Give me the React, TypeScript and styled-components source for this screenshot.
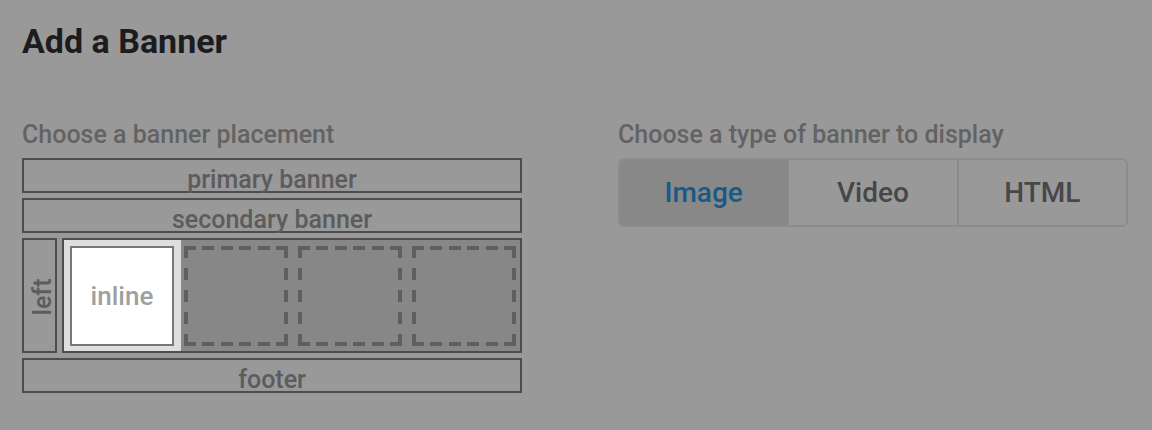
import React, { useState } from 'react';
import styled, { createGlobalStyle, css } from 'styled-components';

const GlobalStyle = createGlobalStyle`
  html, body {
    margin: 0;
    padding: 0;
    background: #999999;
  }
  body {
    font-family: Roboto, "Liberation Sans", sans-serif;
  }
`;

const dash = '#5f5f5f';

const Page = styled.div`
  padding: 24px 22px 0;
`;

const Title = styled.h1`
  margin: 0;
  font-size: 34px;
  line-height: 34px;
  font-weight: 700;
  color: #1c1c1e;
`;

const Columns = styled.div`
  display: flex;
  gap: 96px;
  margin-top: 64px;
`;

const Column = styled.div<{ $width: number }>`
  width: ${({ $width }) => $width}px;
  display: flex;
  flex-direction: column;
`;

const Label = styled.div`
  font-size: 25px;
  line-height: 25px;
  font-weight: 500;
  color: #636363;
  margin-bottom: 11px;
  white-space: nowrap;
`;

const Slots = styled.div`
  display: flex;
  flex-direction: column;
  gap: 5px;
`;

const Slot = styled.div`
  height: 35px;
  box-sizing: border-box;
  border: 2px solid #4d4d4d;
  padding-top: 10px;
  text-align: center;
  font-size: 25px;
  line-height: 20px;
  font-weight: 500;
  color: #5c5c5c;
  cursor: pointer;
`;

const MiddleRow = styled.div`
  display: flex;
  gap: 5px;
  height: 115px;
`;

const SideSlot = styled.div`
  width: 35px;
  box-sizing: border-box;
  border: 2px solid #4d4d4d;
  display: flex;
  align-items: center;
  justify-content: center;
  padding-left: 7px;
  padding-top: 2px;
  font-size: 25px;
  font-weight: 500;
  color: #5c5c5c;
  cursor: pointer;

  span {
    display: block;
    line-height: 20px;
    transform: rotate(-90deg);
    white-space: nowrap;
  }
`;

const Content = styled.div`
  flex: 1;
  box-sizing: border-box;
  border: 2px solid #4d4d4d;
  background: #878787;
  display: flex;
`;

const Cell = styled.div<{ $active: boolean }>`
  width: 114px;
  flex-shrink: 0;
  box-sizing: border-box;
  padding: 6px 4px 5px 6px;
  cursor: pointer;

  ${({ $active }) =>
    $active &&
    css`
      width: 117px;
      padding-right: 7px;
      margin-right: -3px;
      background: #dedede;
    `}
`;

// dashed outline drawn with gradients: 6 dashes across, 5 down
const CellBox = styled.div<{ $active: boolean }>`
  height: 100px;
  box-sizing: border-box;
  display: flex;
  align-items: center;
  justify-content: center;
  font-size: 26px;
  font-weight: 500;
  ${({ $active }) =>
    $active
      ? css`
          background: #ffffff;
          border: 2px solid #777777;
          color: #a0a0a0;
        `
      : css`
          background:
            repeating-linear-gradient(to right, ${dash} 0 12px, transparent 12px 18.4px) top / 100% 4px no-repeat,
            repeating-linear-gradient(to right, ${dash} 0 12px, transparent 12px 18.4px) bottom / 100% 4px no-repeat,
            repeating-linear-gradient(to bottom, ${dash} 0 12px, transparent 12px 22px) left / 4px 100% no-repeat,
            repeating-linear-gradient(to bottom, ${dash} 0 12px, transparent 12px 22px) right / 4px 100% no-repeat;
        `}
`;

const Segments = styled.div`
  display: flex;
  height: 69px;
  box-sizing: border-box;
  border: 2px solid #8c8c8c;
  border-radius: 6px;
  overflow: hidden;
`;

const Segment = styled.button<{ $active: boolean }>`
  flex: 1;
  border: none;
  border-left: 2px solid #8a8a8a;
  margin: 0;
  padding: 0;
  font-family: inherit;
  font-size: 28px;
  font-weight: 500;
  cursor: pointer;
  background: ${({ $active }) => ($active ? '#888888' : '#999999')};
  color: ${({ $active }) => ($active ? '#175a88' : '#474747')};

  &:first-child {
    border-left: none;
  }
`;

const types = ['Image', 'Video', 'HTML'];

export default function App() {
  const [type, setType] = useState('Image');
  const [cell, setCell] = useState(0);

  return (
    <Page>
      <GlobalStyle />
      <Title>Add a Banner</Title>
      <Columns>
        <Column $width={500}>
          <Label>Choose a banner placement</Label>
          <Slots>
            <Slot>primary banner</Slot>
            <Slot>secondary banner</Slot>
            <MiddleRow>
              <SideSlot>
                <span>left</span>
              </SideSlot>
              <Content>
                {[0, 1, 2, 3].map((i) => (
                  <Cell key={i} $active={cell === i} onClick={() => setCell(i)}>
                    <CellBox $active={cell === i}>{cell === i ? 'inline' : null}</CellBox>
                  </Cell>
                ))}
              </Content>
            </MiddleRow>
            <Slot>footer</Slot>
          </Slots>
        </Column>
        <Column $width={510}>
          <Label>Choose a type of banner to display</Label>
          <Segments>
            {types.map((t) => (
              <Segment key={t} $active={type === t} onClick={() => setType(t)}>
                {t}
              </Segment>
            ))}
          </Segments>
        </Column>
      </Columns>
    </Page>
  );
}
